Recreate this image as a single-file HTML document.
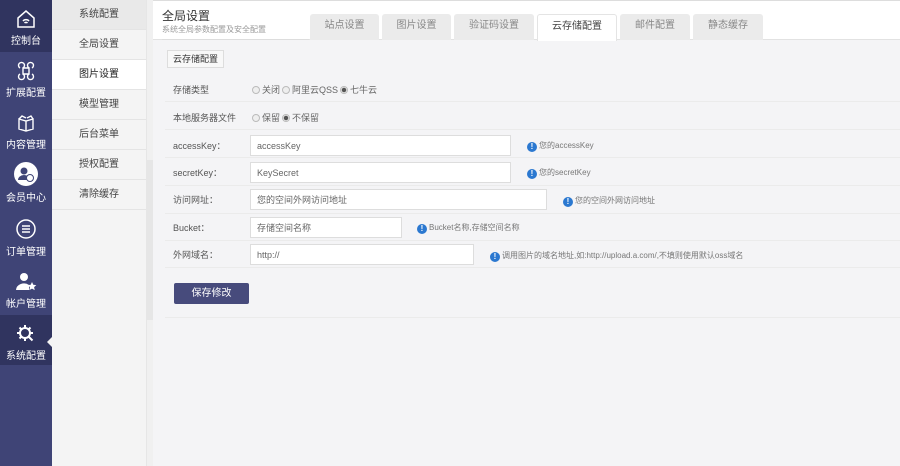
<!DOCTYPE html><html><head><meta charset="utf-8"><style>
*{box-sizing:border-box;margin:0;padding:0}
body{width:900px;height:466px;overflow:hidden;background:#f4f4f6;font-family:"Liberation Sans","Noto Sans CJK SC",sans-serif;font-size:9px;color:#555;position:relative}
.nav{position:absolute;left:0;top:0;width:52px;height:466px;background:#3f4476}
.ni{position:absolute;left:0;width:52px;height:52px;color:#fff;text-align:center;font-size:10px}
.ni svg{display:block;margin:9px auto 3px}
.sub{position:absolute;left:52px;top:0;width:95px;height:466px;background:#f4f4f4;border-right:1px solid #e6e6e6}
.si{height:30px;line-height:30px;text-align:center;font-size:10px;color:#444;border-bottom:1px solid #e4e4e4}
.bar{position:absolute;left:147px;top:0;width:6px;height:466px;background:#f0f0f0}
.thumb{position:absolute;left:147px;top:160px;width:6px;height:160px;background:#e6e6e6}
.hdr{position:absolute;left:153px;top:0;width:747px;height:40px;background:#fff;border-top:1px solid #ddd;border-bottom:1px solid #e2e2e2}
.t1{position:absolute;left:9px;top:6px;font-size:12px;color:#333}
.t2{position:absolute;left:9px;top:23px;font-size:8px;color:#999}
.tab{position:absolute;top:14px;height:26px;line-height:24px;background:#ebebeb;text-align:center;font-size:10px;color:#888;border-radius:3px 3px 0 0}
.tab.a{background:#fff;color:#444;border:1px solid #e4e4e4;border-bottom:none}
.lab{position:absolute;left:173px;font-size:9px;color:#555}
.row{position:absolute;left:165px;width:735px;border-bottom:1px solid #ebebeb}
.in{position:absolute;left:250px;height:21px;background:#fff;border:1px solid #ddd;padding-left:6px;display:flex;align-items:center;font-size:9px;color:#666}
.hint{position:absolute;font-size:8px;color:#777;line-height:12px}
.hint b{display:inline-block;width:10px;height:10px;border-radius:50%;background:#2b78d0;color:#fff;font-size:8px;text-align:center;line-height:10px;margin-right:2px;vertical-align:-1px}
.r{display:inline-block;width:8px;height:8px;border-radius:50%;border:1px solid #bbb;background:#eee;vertical-align:-1px;margin:0 2px}
.r.c{background:radial-gradient(#555 0 2px,#eee 2.5px)}
</style></head><body>
<div class="nav">
<div class="ni" style="top:0;background:#30345f"><svg width="20" height="20" viewBox="0 0 20 20" fill="none" stroke="#fff" stroke-width="1.5"><path d="M2 9L10 2l8 7v9H2z"/><path d="M7 12a4 4 0 0 1 6 0M8.5 14a2 2 0 0 1 3 0"/></svg>控制台</div>
<div class="ni" style="top:52px"><svg width="20" height="20" viewBox="0 0 20 20" fill="none" stroke="#fff" stroke-width="1.4"><path d="M7 7h6v6H7zM7 7a3 3 0 1 0-3 0M13 7a3 3 0 1 1 3 0M7 13a3 3 0 1 1-3 0M13 13a3 3 0 1 0 3 0"/></svg>扩展配置</div>
<div class="ni" style="top:104px"><svg width="20" height="20" viewBox="0 0 20 20" fill="none" stroke="#fff" stroke-width="1.4"><path d="M3 6l7 2 7-2v10l-7 2-7-2zM10 8v10M3 6l3-3 4 2M17 6l-2-3-4 2"/></svg>内容管理</div>
<div class="ni" style="top:156px"><svg width="24" height="24" viewBox="0 0 24 24" style="margin-top:6px"><circle cx="12" cy="12" r="12" fill="#fff"/><circle cx="10" cy="9" r="3.5" fill="#3f4476"/><path d="M4 18a6 5 0 0 1 12 0z" fill="#3f4476"/><circle cx="16" cy="16" r="3.5" fill="#fff" stroke="#3f4476"/></svg>会员中心</div>
<div class="ni" style="top:208px"><svg width="22" height="22" viewBox="0 0 22 22" fill="none" stroke="#fff" stroke-width="1.5" style="margin-top:10px"><circle cx="11" cy="11" r="9"/><path d="M7 8h8M7 11h8M7 14h8"/></svg>订单管理</div>
<div class="ni" style="top:262px"><svg width="22" height="20" viewBox="0 0 22 20" fill="#fff" style="margin-top:10px"><circle cx="9" cy="5" r="4"/><path d="M1 18a8 7 0 0 1 13-5v5z"/><path d="M17 10l1.3 2.7 3 .4-2.2 2 .6 3-2.7-1.5-2.7 1.5.6-3-2.2-2 3-.4z"/></svg>帐户管理</div>
<div class="ni" style="top:315px;height:50px;background:#30345f"><svg width="20" height="20" viewBox="0 0 20 20" fill="none" stroke="#fff" stroke-width="2"><circle cx="9" cy="9" r="5"/><path d="M9 1v3M9 14v3M1 9h3M14 9h3M3.5 3.5l2 2M12.5 12.5l4 4M3.5 14.5l2-2M14.5 3.5l-2 2"/></svg>系统配置</div>
<div style="position:absolute;left:47px;top:337px;border:5px solid transparent;border-right-color:#f4f4f4;border-left:none"></div>
</div>
<div class="sub">
<div class="si" style="background:#e9e9e9">系统配置</div>
<div class="si">全局设置</div>
<div class="si" style="background:#fff;color:#222">图片设置</div>
<div class="si">模型管理</div>
<div class="si">后台菜单</div>
<div class="si">授权配置</div>
<div class="si">清除缓存</div>
</div>
<div class="bar"></div><div class="thumb"></div>
<div class="hdr"><div class="t1">全局设置</div><div class="t2">系统全局参数配置及安全配置</div>
<div style="position:absolute;left:9px;top:38px;width:147px;border-top:1px solid #ddd"></div></div>
<div class="tab" style="left:310px;width:69px">站点设置</div>
<div class="tab" style="left:382px;width:69px">图片设置</div>
<div class="tab" style="left:454px;width:80px">验证码设置</div>
<div class="tab a" style="left:537px;width:80px;height:27px">云存储配置</div>
<div class="tab" style="left:620px;width:70px">邮件配置</div>
<div class="tab" style="left:693px;width:70px">静态缓存</div>
<div style="position:absolute;left:167px;top:50px;width:57px;height:18px;border:1px solid #ddd;background:#f8f8f8;line-height:16px;text-align:center;font-size:9px;color:#333">云存储配置</div>
<div class="row" style="top:74px;height:28px"></div>
<div class="row" style="top:102px;height:28px"></div>
<div class="row" style="top:130px;height:28px"></div>
<div class="row" style="top:158px;height:28px"></div>
<div class="row" style="top:186px;height:28px"></div>
<div class="row" style="top:214px;height:27px"></div>
<div class="row" style="top:241px;height:27px"></div>
<div class="row" style="top:268px;height:50px"></div>
<div class="lab" style="top:83px">存储类型</div>
<div class="lab" style="left:250px;top:83px;color:#666"><span class="r"></span>关闭<span class="r"></span>阿里云QSS<span class="r c"></span>七牛云</div>
<div class="lab" style="top:111px">本地服务器文件</div>
<div class="lab" style="left:250px;top:111px;color:#666"><span class="r"></span>保留<span class="r c"></span>不保留</div>
<div class="lab" style="top:139px">accessKey：</div><div class="in" style="top:135px;width:261px">accessKey</div><div class="hint" style="left:527px;top:140px"><b>!</b>您的accessKey</div>
<div class="lab" style="top:166px">secretKey：</div><div class="in" style="top:162px;width:261px">KeySecret</div><div class="hint" style="left:527px;top:167px"><b>!</b>您的secretKey</div>
<div class="lab" style="top:193px">访问网址：</div><div class="in" style="top:189px;width:297px">您的空间外网访问地址</div><div class="hint" style="left:563px;top:195px"><b>!</b>您的空间外网访问地址</div>
<div class="lab" style="top:221px">Bucket：</div><div class="in" style="top:217px;width:152px">存储空间名称</div><div class="hint" style="left:417px;top:222px"><b>!</b>Bucket名称,存储空间名称</div>
<div class="lab" style="top:248px">外网域名：</div><div class="in" style="top:244px;width:224px">http://</div><div class="hint" style="left:490px;top:250px"><b>!</b>调用图片的域名地址,如:http://upload.a.com/,不填则使用默认oss域名</div>
<div style="position:absolute;left:174px;top:283px;width:75px;height:21px;background:#474b7c;color:#fff;border-radius:2px;text-align:center;line-height:21px;font-size:10px">保存修改</div>
</body></html>
